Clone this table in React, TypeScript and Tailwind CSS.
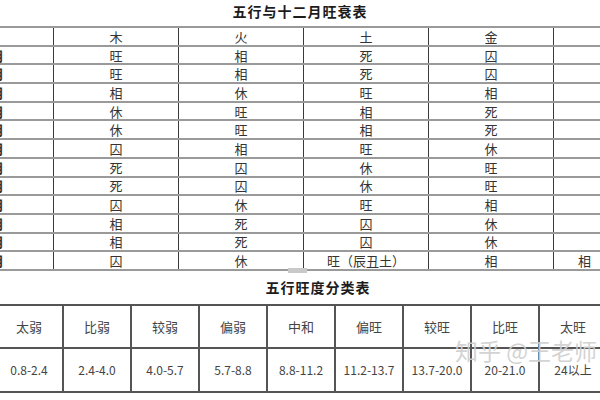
import React from 'react';

const head = ['', '木', '火', '土', '金', ''];

// month rows: first cell is the (clipped) month name, last is the clipped 水 column
const months: string[][] = [
  ['正月', '旺', '相', '死', '囚', ''],
  ['二月', '旺', '相', '死', '囚', ''],
  ['三月', '相', '休', '旺', '相', ''],
  ['四月', '休', '旺', '相', '死', ''],
  ['五月', '休', '旺', '相', '死', ''],
  ['六月', '囚', '相', '旺', '休', ''],
  ['七月', '死', '囚', '休', '旺', ''],
  ['八月', '死', '囚', '休', '旺', ''],
  ['九月', '囚', '休', '旺', '相', ''],
  ['十月', '相', '死', '囚', '休', ''],
  ['冬月', '相', '死', '囚', '休', ''],
  ['腊月', '囚', '休', '旺（辰丑土）', '相', '相'],
];

const levels = ['太弱', '比弱', '较弱', '偏弱', '中和', '偏旺', '较旺', '比旺', '太旺'];
const ranges = ['0.8-2.4', '2.4-4.0', '4.0-5.7', '5.7-8.8', '8.8-11.2', '11.2-13.7', '13.7-20.0', '20-21.0', '24以上'];

const font = { fontFamily: '"Noto Sans CJK SC", "Noto Sans", sans-serif' };

const App: React.FC = () => {
  return (
    <div className="relative w-[600px] h-[400px] overflow-hidden bg-white flex flex-col" style={font}>
      {/* title */}
      <div className="h-[26px] flex justify-center items-start pt-[2px]">
        <span className="text-[14px] font-bold text-[#1c1c1c] tracking-[1px] leading-[18px]">五行与十二月旺衰表</span>
      </div>

      {/* month table */}
      <div className="ml-[-71px] w-[750px] border-t-2 border-[#9a9a9a]">
        {[head, ...months].map((row, i) => (
          <div key={i} className="grid grid-cols-6 h-[18.7px] border-b-2 border-[#9a9a9a]">
            {row.map((cell, j) => (
              <div
                key={j}
                className={
                  'border-r border-[#3a3a3a] flex items-center text-[13px] leading-none text-[#333] ' +
                  (j === 0 ? 'justify-end pr-[49px] font-bold text-[#111]' : j === 5 ? 'justify-start pl-[24px]' : 'justify-center')
                }
              >
                {cell}
              </div>
            ))}
          </div>
        ))}
      </div>

      {/* small gray mark */}
      <div className="absolute left-[288px] top-[268px] w-[19px] h-[5px] bg-[#c9c9c9]" />

      {/* second title */}
      <div className="h-[33px] flex justify-center items-center pl-[36px]">
        <span className="text-[14px] font-bold text-[#1c1c1c] tracking-[1px] leading-[18px]">五行旺度分类表</span>
      </div>

      {/* strength table */}
      <div className="ml-[-4px] w-[612px] border-t-2 border-[#555]">
        <div className="grid grid-cols-9 h-[43px] border-b-2 border-[#555]">
          {levels.map((l) => (
            <div key={l} className="border-r-2 border-[#555] flex items-center justify-center text-[13px] text-[#444]">
              {l}
            </div>
          ))}
        </div>
        <div className="grid grid-cols-9 h-[44px] border-b-2 border-[#555]">
          {ranges.map((r) => (
            <div key={r} className="border-r-2 border-[#555] flex items-center justify-center text-[12px] text-[#444] whitespace-nowrap">
              {r}
            </div>
          ))}
        </div>
      </div>

      {/* watermark */}
      <div className="absolute left-[455px] top-[334px] text-[23px] leading-[32px] text-[#cfcfcf] opacity-90 whitespace-nowrap">
        知乎 @王老师
      </div>
    </div>
  );
};

export default App;
